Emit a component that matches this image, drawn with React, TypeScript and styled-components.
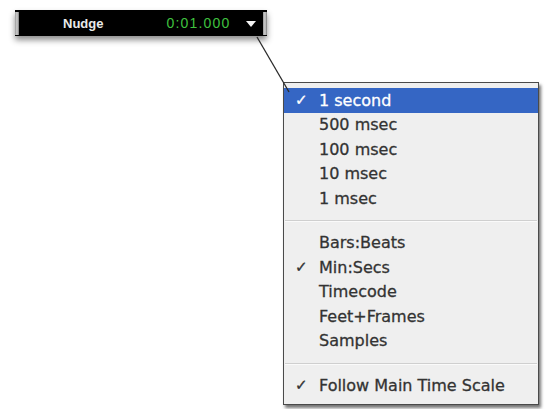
import React from 'react';
import styled, { createGlobalStyle } from 'styled-components';

const GlobalStyle = createGlobalStyle`
    html, body {
        margin: 0;
        padding: 0;
        background: #ffffff;
    }
`;

type Item = { label: string; checked?: boolean; active?: boolean };

const resolutions: Item[] = [
    { label: '1 second', checked: true, active: true },
    { label: '500 msec' },
    { label: '100 msec' },
    { label: '10 msec' },
    { label: '1 msec' },
];

const formats: Item[] = [
    { label: 'Bars:Beats' },
    { label: 'Min:Secs', checked: true },
    { label: 'Timecode' },
    { label: 'Feet+Frames' },
    { label: 'Samples' },
];

const MenuGroup = ({ items }: { items: Item[] }) => (
    <>
        {items.map((item) => (
            <Row key={item.label} active={item.active}>
                <Check>{item.checked ? '✓' : ''}</Check>
                <span>{item.label}</span>
            </Row>
        ))}
    </>
);

export default function App() {
    return (
        <Page>
            <GlobalStyle />
            <Toolbar>
                <Cap />
                <Display>
                    <Label>Nudge</Label>
                    <Value>0:01.000</Value>
                    <Arrow />
                </Display>
                <Cap />
            </Toolbar>
            <Menu>
                <MenuGroup items={resolutions} />
                <Separator />
                <MenuGroup items={formats} />
                <Separator />
                <Row>
                    <Check>✓</Check>
                    <span>Follow Main Time Scale</span>
                </Row>
            </Menu>
            <Connector width="545" height="409">
                <line x1="257" y1="37" x2="289" y2="92" stroke="#2a2a2a" strokeWidth="1.3" />
            </Connector>
        </Page>
    );
}

const Page = styled.div`
    position: relative;
    width: 545px;
    height: 409px;
    padding: 10px 0 0 15px;
    box-sizing: border-box;
    display: flex;
    flex-direction: column;
    align-items: flex-start;
`;

const Toolbar = styled.div`
    display: flex;
    width: 252px;
    height: 26px;
    background: #000;
    box-shadow: 0 4px 6px rgba(0, 0, 0, 0.45);
`;

const Cap = styled.div`
    width: 4px;
    margin: 2px 0 1px;
    background: linear-gradient(90deg, #9a9a9a, #d0d0d0 50%, #7a7a7a);
`;

const Display = styled.div`
    flex: 1;
    display: flex;
    align-items: center;
`;

const Label = styled.span`
    margin-left: 44px;
    font-family: "Liberation Sans", Arial, sans-serif;
    font-size: 13px;
    font-weight: bold;
    color: #eaeaea;
`;

const Value = styled.span`
    margin-left: 63px;
    font-family: "Liberation Sans", Arial, sans-serif;
    font-size: 14px;
    letter-spacing: 1.2px;
    color: #3fc23f;
`;

const Arrow = styled.span`
    margin-left: 15px;
    margin-top: 2px;
    width: 0;
    height: 0;
    border-left: 5px solid transparent;
    border-right: 5px solid transparent;
    border-top: 6px solid #f4f4f4;
`;

const Menu = styled.div`
    margin: 46px 0 0 268px;
    width: 254px;
    padding: 5px 0 6px;
    background: #efefef;
    border: 1px solid #4a4a4a;
    box-shadow: 2px 3px 3px rgba(0, 0, 0, 0.55);
    font-family: "DejaVu Sans", Verdana, sans-serif;
    font-size: 16px;
    -webkit-text-stroke: 0.3px currentColor;
`;

const Row = styled.div<{ active?: boolean }>`
    display: flex;
    align-items: center;
    height: 24.5px;
    padding-left: 11px;
    background: ${(p) => (p.active ? '#3566c4' : 'transparent')};
    color: ${(p) => (p.active ? '#ffffff' : '#333333')};
`;

const Check = styled.span`
    width: 24px;
    font-size: 15px;
`;

const Separator = styled.div`
    height: 20px;
    display: flex;
    align-items: center;
    &::after {
        content: '';
        flex: 1;
        height: 1px;
        margin: 0 1px;
        background: #cfcfcf;
        box-shadow: 0 1px 0 #fafafa;
    }
`;

const Connector = styled.svg`
    position: absolute;
    left: 0;
    top: 0;
    pointer-events: none;
`;
